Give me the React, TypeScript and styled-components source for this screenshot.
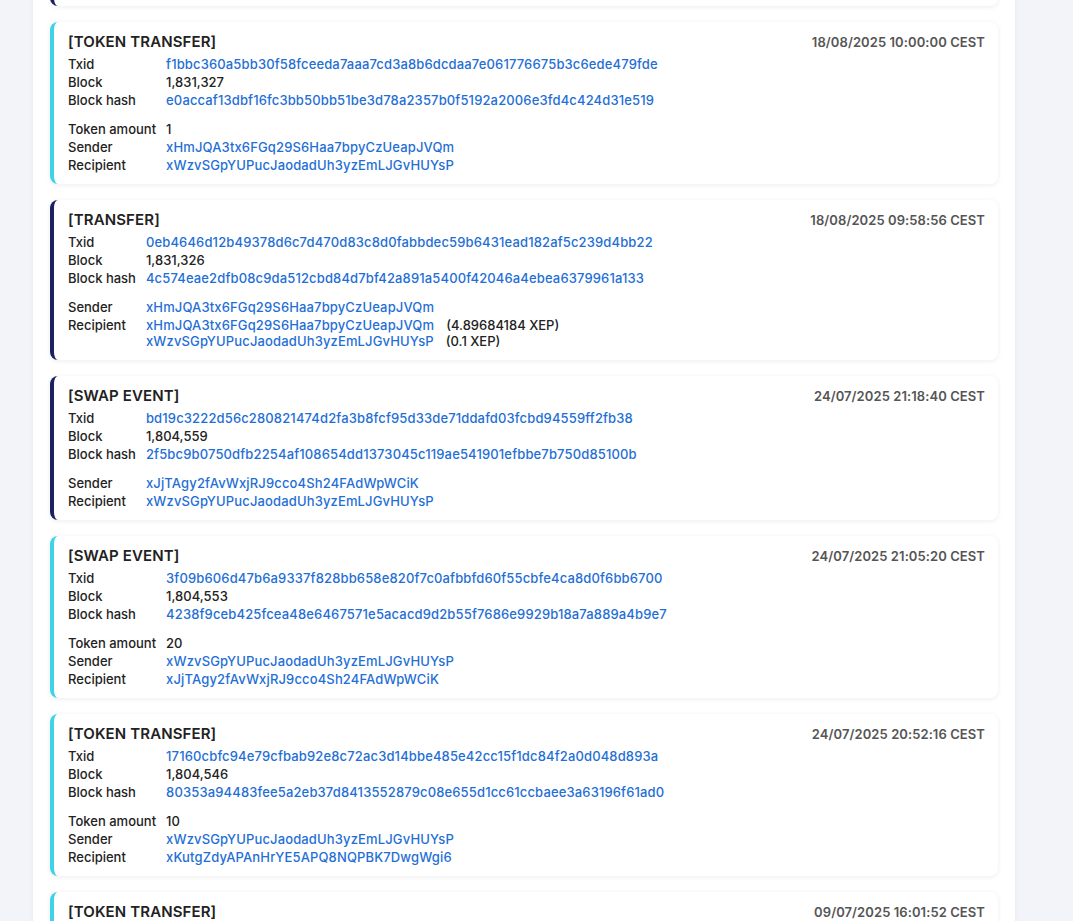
import styled, { createGlobalStyle } from "styled-components";

const GlobalStyle = createGlobalStyle`
	html, body {
		margin: 0;
		padding: 0;
		background: #f3f4f9;
		font-family: Inter, "Noto Sans", "Liberation Sans", sans-serif;
		color: #222;
	}
`;

type Output = { address: string; amount?: string };

type Tx = {
	kind: string;
	accent: "cyan" | "navy";
	time: string;
	txid: string;
	block: string;
	blockHash: string;
	tokenAmount?: string;
	sender: string;
	recipients: Output[];
};

const accents = {
	cyan: "#3ed3e6",
	navy: "#1c2160",
};

// Scrolled page: the panel starts above the viewport
const Page = styled.div`
	margin-top: -171px;
	padding-left: 33px;
`;

const Panel = styled.main`
	width: 982px;
	box-sizing: border-box;
	background: #fff;
	padding: 17px 17px 40px;
	box-shadow: 0 0 6px rgba(20, 30, 60, 0.05);
	display: flex;
	flex-direction: column;
	gap: 16px;
`;

const Card = styled.article<{ $accent: "cyan" | "navy" }>`
	background: #fff;
	border-radius: 8px;
	border-left: 4px solid ${(p) => accents[p.$accent]};
	box-shadow: 0 1px 5px rgba(20, 30, 60, 0.08);
	padding: 10px 13px 10px 14px;
`;

const Header = styled.div`
	display: flex;
	align-items: center;
	justify-content: space-between;
	margin-bottom: 3px;
`;

const Title = styled.h3`
	margin: 0;
	font-size: 15px;
	line-height: 20px;
	font-weight: 600;
	letter-spacing: 0.12px;
	color: #222;
`;

const Time = styled.span`
	font-size: 13px;
	line-height: 20px;
	font-weight: 600;
	letter-spacing: 0.08px;
	color: #555;
`;

const Details = styled.div`
	display: grid;
	grid-template-columns: max-content 1fr;
	column-gap: 10px;
	font-size: 13px;
	line-height: 18px;
`;

const Label = styled.div`
	font-weight: 500;
	color: #222;
`;

const Value = styled.div`
	font-weight: 500;
	color: #222;
`;

const Spacer = styled.div`
	grid-column: 1 / -1;
	height: 11px;
`;

const HashLink = styled.a`
	color: #1f6fd6;
	text-decoration: none;
	font-weight: 500;
	letter-spacing: 0.14px;
`;

const OutputList = styled.div`
	padding: 1px 0;
	line-height: 16px;
`;

const OutputRow = styled.div`
	display: flex;
	gap: 12px;
`;

const Amount = styled.span`
	font-weight: 500;
	color: #222;
`;

const txs: Tx[] = [
	{
		kind: "TRANSFER",
		accent: "navy",
		time: "18/08/2025 10:02:14 CEST",
		txid: "9a1c52f0e4b7d3a86c21f5e90d7b4c3a2e18f6d05c9b7a43e21d8f6c0b5a4e39",
		block: "1,831,329",
		blockHash: "7d2e91b4c06f3a58e17d24c9b0a3f68e51d2c7b94a06e3f18c52d7a9b40e6f21",
		sender: "xHmJQA3tx6FGq29S6Haa7bpyCzUeapJVQm",
		recipients: [
			{ address: "xHmJQA3tx6FGq29S6Haa7bpyCzUeapJVQm", amount: "(3.71250000 XEP)" },
			{ address: "xWzvSGpYUPucJaodadUh3yzEmLJGvHUYsP", amount: "(0.1 XEP)" },
		],
	},
	{
		kind: "TOKEN TRANSFER",
		accent: "cyan",
		time: "18/08/2025 10:00:00 CEST",
		txid: "f1bbc360a5bb30f58fceeda7aaa7cd3a8b6dcdaa7e061776675b3c6ede479fde",
		block: "1,831,327",
		blockHash: "e0accaf13dbf16fc3bb50bb51be3d78a2357b0f5192a2006e3fd4c424d31e519",
		tokenAmount: "1",
		sender: "xHmJQA3tx6FGq29S6Haa7bpyCzUeapJVQm",
		recipients: [{ address: "xWzvSGpYUPucJaodadUh3yzEmLJGvHUYsP" }],
	},
	{
		kind: "TRANSFER",
		accent: "navy",
		time: "18/08/2025 09:58:56 CEST",
		txid: "0eb4646d12b49378d6c7d470d83c8d0fabbdec59b6431ead182af5c239d4bb22",
		block: "1,831,326",
		blockHash: "4c574eae2dfb08c9da512cbd84d7bf42a891a5400f42046a4ebea6379961a133",
		sender: "xHmJQA3tx6FGq29S6Haa7bpyCzUeapJVQm",
		recipients: [
			{ address: "xHmJQA3tx6FGq29S6Haa7bpyCzUeapJVQm", amount: "(4.89684184 XEP)" },
			{ address: "xWzvSGpYUPucJaodadUh3yzEmLJGvHUYsP", amount: "(0.1 XEP)" },
		],
	},
	{
		kind: "SWAP EVENT",
		accent: "navy",
		time: "24/07/2025 21:18:40 CEST",
		txid: "bd19c3222d56c280821474d2fa3b8fcf95d33de71ddafd03fcbd94559ff2fb38",
		block: "1,804,559",
		blockHash: "2f5bc9b0750dfb2254af108654dd1373045c119ae541901efbbe7b750d85100b",
		sender: "xJjTAgy2fAvWxjRJ9cco4Sh24FAdWpWCiK",
		recipients: [{ address: "xWzvSGpYUPucJaodadUh3yzEmLJGvHUYsP" }],
	},
	{
		kind: "SWAP EVENT",
		accent: "cyan",
		time: "24/07/2025 21:05:20 CEST",
		txid: "3f09b606d47b6a9337f828bb658e820f7c0afbbfd60f55cbfe4ca8d0f6bb6700",
		block: "1,804,553",
		blockHash: "4238f9ceb425fcea48e6467571e5acacd9d2b55f7686e9929b18a7a889a4b9e7",
		tokenAmount: "20",
		sender: "xWzvSGpYUPucJaodadUh3yzEmLJGvHUYsP",
		recipients: [{ address: "xJjTAgy2fAvWxjRJ9cco4Sh24FAdWpWCiK" }],
	},
	{
		kind: "TOKEN TRANSFER",
		accent: "cyan",
		time: "24/07/2025 20:52:16 CEST",
		txid: "17160cbfc94e79cfbab92e8c72ac3d14bbe485e42cc15f1dc84f2a0d048d893a",
		block: "1,804,546",
		blockHash: "80353a94483fee5a2eb37d8413552879c08e655d1cc61ccbaee3a63196f61ad0",
		tokenAmount: "10",
		sender: "xWzvSGpYUPucJaodadUh3yzEmLJGvHUYsP",
		recipients: [{ address: "xKutgZdyAPAnHrYE5APQ8NQPBK7DwgWgi6" }],
	},
	{
		kind: "TOKEN TRANSFER",
		accent: "cyan",
		time: "09/07/2025 16:01:52 CEST",
		txid: "a4c81e07b9d25f36e1c0a7d48b93f2e65c17d0a9b84e3f26c5d1a07e98b4c3f2",
		block: "1,781,204",
		blockHash: "5e02d7c9a41b38f6e0d9c24a7b15e83f60c2d9a7b41e5f38c06d2a9e7b4c1f05",
		tokenAmount: "5",
		sender: "xWzvSGpYUPucJaodadUh3yzEmLJGvHUYsP",
		recipients: [{ address: "xHmJQA3tx6FGq29S6Haa7bpyCzUeapJVQm" }],
	},
];

function TxCard({ tx }: { tx: Tx }) {
	return (
		<Card $accent={tx.accent}>
			<Header>
				<Title>[{tx.kind}]</Title>
				<Time>{tx.time}</Time>
			</Header>
			<Details>
				<Label>Txid</Label>
				<Value>
					<HashLink href="#">{tx.txid}</HashLink>
				</Value>
				<Label>Block</Label>
				<Value>{tx.block}</Value>
				<Label>Block hash</Label>
				<Value>
					<HashLink href="#">{tx.blockHash}</HashLink>
				</Value>
				<Spacer />
				{tx.tokenAmount && (
					<>
						<Label>Token amount</Label>
						<Value>{tx.tokenAmount}</Value>
					</>
				)}
				<Label>Sender</Label>
				<Value>
					<HashLink href="#">{tx.sender}</HashLink>
				</Value>
				<Label>Recipient</Label>
				{tx.recipients.length > 1 ? (
					<OutputList>
						{tx.recipients.map((r, i) => (
							<OutputRow key={i}>
								<HashLink href="#">{r.address}</HashLink>
								{r.amount && <Amount>{r.amount}</Amount>}
							</OutputRow>
						))}
					</OutputList>
				) : (
					<Value>
						<HashLink href="#">{tx.recipients[0].address}</HashLink>
					</Value>
				)}
			</Details>
		</Card>
	);
}

export default function App() {
	return (
		<>
			<GlobalStyle />
			<Page>
				<Panel>
					{txs.map((tx) => (
						<TxCard key={tx.txid} tx={tx} />
					))}
				</Panel>
			</Page>
		</>
	);
}
